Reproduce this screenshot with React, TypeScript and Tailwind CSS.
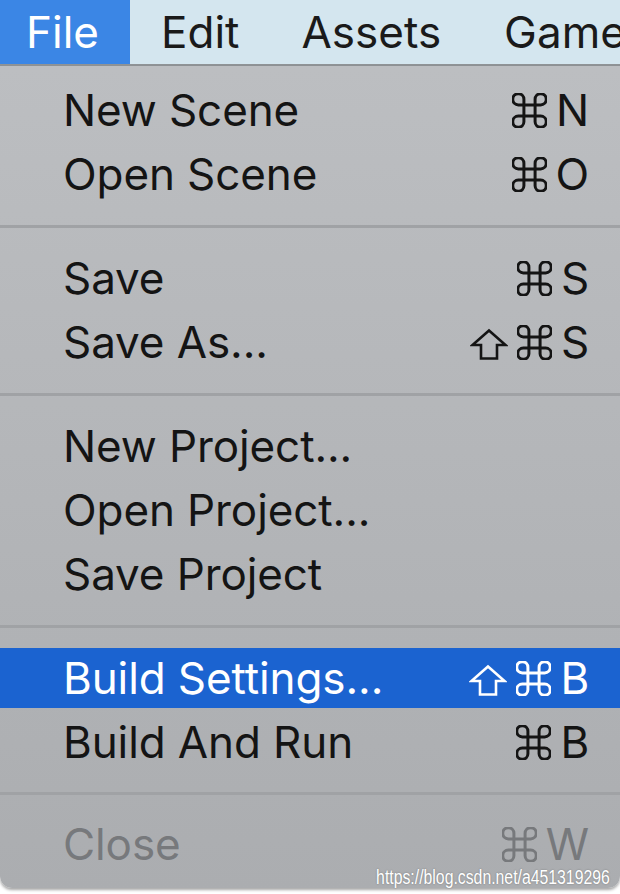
import React from "react";

type Item = { label: string; keys?: string; shift?: boolean; active?: boolean; disabled?: boolean };

const Cmd = ({ color }: { color: string }) => (
  <svg width="35" height="35" viewBox="2.6 2.6 18.8 18.8" fill="none" stroke={color} strokeWidth={1.6} strokeLinecap="round" strokeLinejoin="round">
    <path d="M15 6v12a3 3 0 1 0 3-3H6a3 3 0 1 0 3 3V6a3 3 0 1 0-3 3h12a3 3 0 1 0-3-3" />
  </svg>
);
const Shift = ({ color }: { color: string }) => (
  <svg width="38" height="32" viewBox="0 0 38 32" fill="none" stroke={color} strokeWidth={2.6} strokeLinejoin="miter">
    <path d="M19 2.5 L35.5 17 H27 V30.5 H11 V17 H2.5 Z" />
  </svg>
);

function Row({ item }: { item: Item }) {
  const color = item.active ? "#ffffff" : item.disabled ? "#77797c" : "#141414";
  const row = (
    <div
      className={
        "flex items-center justify-between pl-[63px] pr-[31px] text-[44px] leading-none " +
        (item.active ? "h-[60px] bg-[#1b63d0] text-white" : "h-[64px]") +
        (item.disabled ? " text-[#77797c]" : item.active ? "" : " text-[#141414]")
      }
    >
      <span className="tracking-[-0.1px]">{item.label}</span>
      {item.keys && (
        <span className="flex items-center gap-[9px]">
          {item.shift && <span className="flex items-end h-[35px] pt-[2px]"><Shift color={color} /></span>}
          <Cmd color={color} />
          <span className="tracking-[-0.2px]">{item.keys}</span>
        </span>
      )}
    </div>
  );
  if (item.active) return <div className="py-[2px]">{row}</div>;
  return row;
}

function Sep({ h }: { h: string }) {
  return (
    <div className={"flex items-center " + h}>
      <div className="h-[3px] w-full bg-[#a0a2a5]" />
    </div>
  );
}

export default function App() {
  const groups: Item[][] = [
    [
      { label: "New Scene", keys: "N" },
      { label: "Open Scene", keys: "O" },
    ],
    [
      { label: "Save", keys: "S" },
      { label: "Save As...", keys: "S", shift: true },
    ],
    [{ label: "New Project..." }, { label: "Open Project..." }, { label: "Save Project" }],
    [
      { label: "Build Settings...", keys: "B", shift: true, active: true },
      { label: "Build And Run", keys: "B" },
    ],
    [{ label: "Close", keys: "W", disabled: true }],
  ];
  const sepH = ["h-[40px]", "h-[40px]", "h-[40px]", "h-[38px]"];
  return (
    <div className="relative w-[620px] h-[894px] overflow-hidden bg-white font-['Inter',sans-serif]">
      <div className="flex h-[66px] items-stretch overflow-hidden bg-[#d4e6ef] border-b-2 border-[#8f9396] text-[44px] leading-none text-[#1a1a1a]">
        <div className="flex w-[130px] shrink-0 items-center bg-[#3b86e5] pl-[26px] text-white">File</div>
        <div className="flex shrink-0 items-center ml-[31px]">Edit</div>
        <div className="flex shrink-0 items-center ml-[62px]">Assets</div>
        <div className="flex shrink-0 items-center ml-[63px] whitespace-nowrap">Game</div>
      </div>
      <div className="h-[822px] rounded-b-[12px] bg-gradient-to-b from-[#bcbec1] to-[#abadb0] pt-[12px] shadow-[0_2px_3px_rgba(0,0,0,0.35)]">
        {groups.map((g, gi) => (
          <React.Fragment key={gi}>
            {gi > 0 && <Sep h={sepH[gi - 1]} />}
            {g.map((it) => (
              <Row key={it.label} item={it} />
            ))}
          </React.Fragment>
        ))}
      </div>
      <div className="absolute right-[10px] top-[867px] origin-right scale-x-[0.79] whitespace-nowrap font-['Liberation_Sans',sans-serif] text-[20px] leading-none text-white [text-shadow:0_0_2px_rgba(0,0,0,0.35)]">
        https://blog.csdn.net/a451319296
      </div>
    </div>
  );
}
